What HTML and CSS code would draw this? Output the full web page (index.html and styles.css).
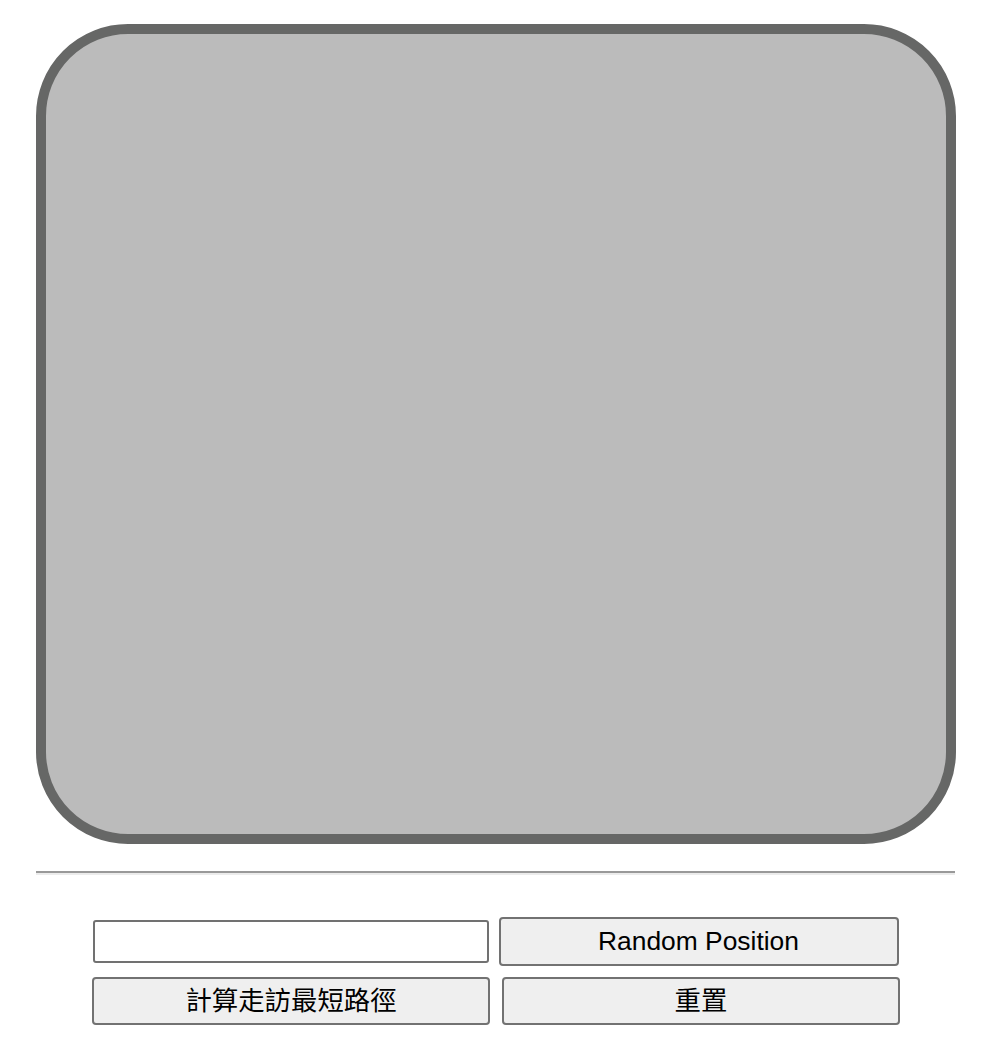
FILE: index.html
```html
<!DOCTYPE html>
<html lang="zh-Hant">
<head>
<meta charset="utf-8">
<title>Shortest Path</title>
<link rel="stylesheet" href="styles.css">
</head>
<body>
<div class="board"></div>
<hr class="divider">
<div class="controls">
  <div class="row row-top">
    <input class="field" type="text">
    <button class="btn btn-random">Random Position</button>
  </div>
  <div class="row row-bottom">
    <button class="btn btn-calc">計算走訪最短路徑</button>
    <button class="btn btn-reset">重置</button>
  </div>
</div>
</body>
</html>
```

FILE: styles.css
```css
html, body {
  background: #ffffff;
}
body {
  margin: 8px;
  font-family: "Liberation Sans", Arial, "Noto Sans CJK TC", sans-serif;
}
.board {
  box-sizing: border-box;
  width: 920px;
  height: 820px;
  margin: 16px 0 0 28px;
  border: 10px solid #666766;
  border-radius: 92px;
  background: #bbbbbb;
}
.divider {
  box-sizing: border-box;
  width: 919px;
  height: 4px;
  margin: 27px 0 0 28px;
  border: 0;
  border-top: 2px solid #999999;
  border-bottom: 2px solid #ececec;
}
.controls {
  display: flex;
  flex-direction: column;
  gap: 11px;
  margin-top: 42px;
}
.row {
  display: flex;
  align-items: center;
  justify-content: center;
}
.row-top {
  gap: 10px;
  padding-right: 3px;
}
.row-bottom {
  gap: 12px;
  padding-right: 2px;
}
.field {
  box-sizing: border-box;
  width: 396px;
  height: 43px;
  margin: 0;
  padding: 2px 8px;
  border: 2px solid #717171;
  border-radius: 3px;
  background: #ffffff;
  font-size: 24px;
  font-family: inherit;
}
.btn {
  box-sizing: border-box;
  margin: 0;
  padding: 0 6px;
  border: 2px solid #727272;
  border-radius: 4px;
  background: #efefef;
  color: #000000;
  font-family: "Liberation Sans", Arial, "Noto Sans CJK TC", sans-serif;
  font-size: 26.4px;
  line-height: 1;
}
.btn-random {
  width: 400px;
  height: 49px;
  padding-bottom: 1px;
}
.btn-calc,
.btn-reset {
  width: 398px;
  height: 48px;
}
```
